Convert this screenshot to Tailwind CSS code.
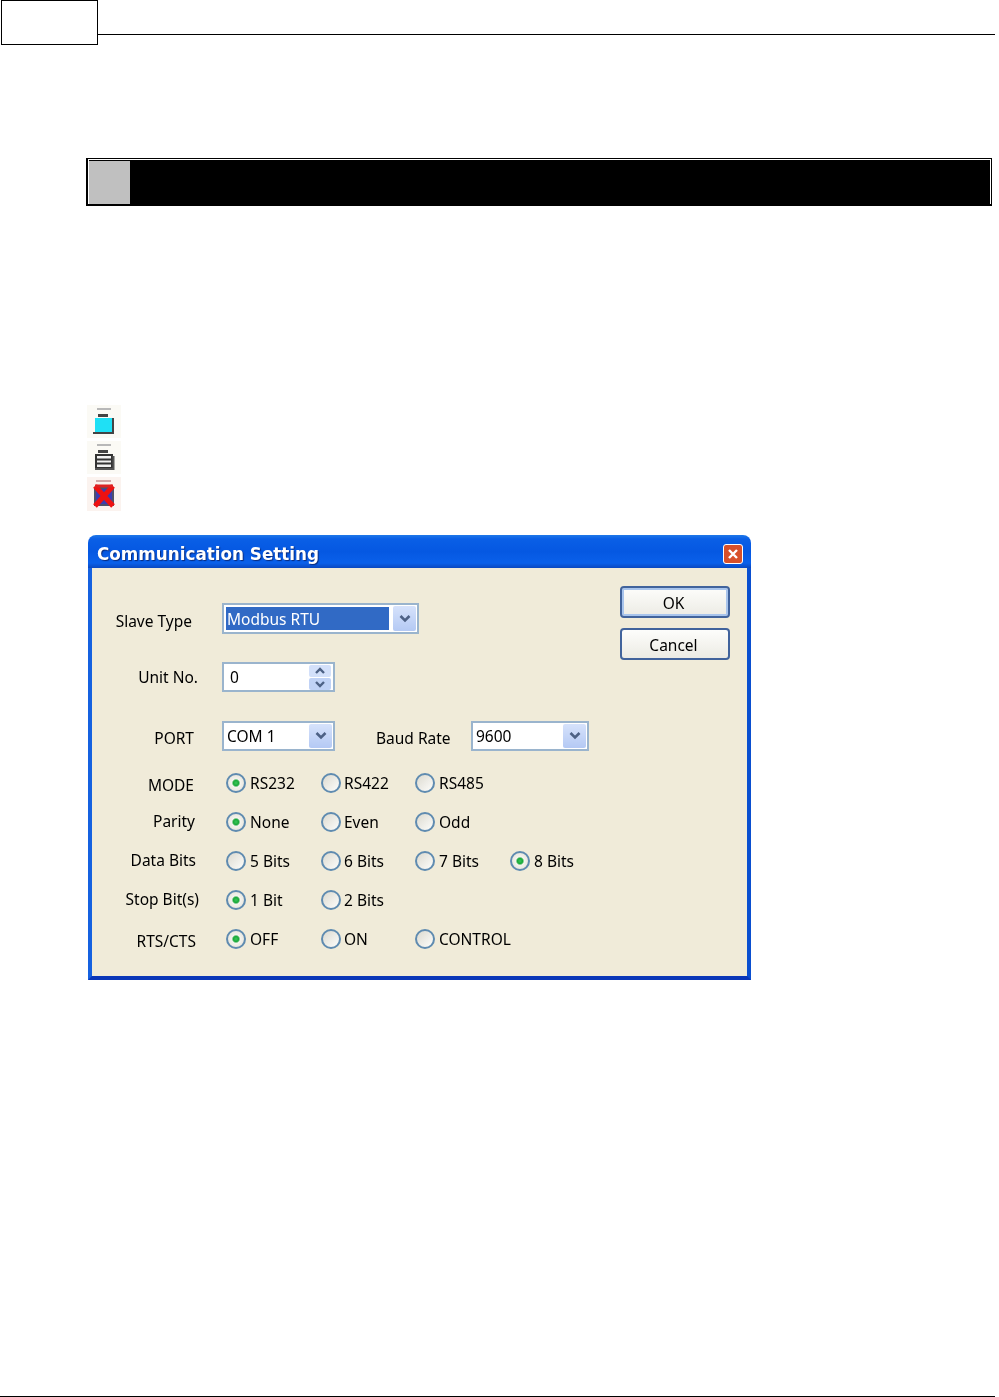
<!doctype html>
<html>
<head>
<meta charset="utf-8">
<script src="https://cdn.jsdelivr.net/npm/@tailwindcss/browser@4"></script>
</head>
<body class="bg-white">
<div class="relative w-[999px] h-[1397px] overflow-hidden bg-white font-['Noto_Sans',sans-serif] text-[15.5px] leading-[18px] text-black">

  <!-- header -->
  <header class="flex items-start pl-[1px] pr-[4px]">
    <div class="w-[97px] h-[45px] border border-black shrink-0"></div>
    <div class="flex-1 h-[1px] mt-[34px] bg-black"></div>
  </header>

  <!-- black section bar -->
  <div class="ml-[86px] mt-[113px] w-[906px] h-[48px] border-t border-l-2 border-b-2 border-r border-black bg-black">
    <div class="flex h-full border-l border-t border-r border-white">
      <div class="w-[41px] mt-[1px] bg-[#c0c0c0]"></div>
    </div>
  </div>

  <!-- toolbar icons -->
  <div class="ml-[87px] mt-[199px] flex flex-col gap-[3px] w-[34px] blur-[0.6px]">
    <svg width="34" height="33" viewBox="0 0 34 33" class="block bg-[#fbfaf5]">
      <rect x="10" y="3" width="14" height="2" fill="#b8b8b8"/>
      <rect x="11" y="9" width="10" height="3" fill="#444"/>
      <rect x="8" y="13" width="17" height="14" fill="#1fe0f5"/>
      <path d="M26 13v15H6" fill="none" stroke="#444" stroke-width="2"/>
    </svg>
    <svg width="34" height="33" viewBox="0 0 34 33" class="block bg-[#fbfaf5]">
      <rect x="10" y="3" width="14" height="2" fill="#b8b8b8"/>
      <rect x="11" y="9" width="10" height="3" fill="#444"/>
      <rect x="9" y="14" width="16" height="13" fill="#f2f2f2" stroke="#333" stroke-width="2"/>
      <path d="M9 18.500h16M9 22.500h16" stroke="#333" stroke-width="1.800"/>
      <path d="M26.500 15v13H8" fill="none" stroke="#555" stroke-width="2"/>
    </svg>
    <svg width="34" height="34" viewBox="0 0 34 34" class="block bg-[#fbf3ef]">
      <rect x="9" y="3" width="15" height="2" fill="#d0a8a8"/>
      <rect x="8" y="11" width="18" height="17" fill="#3c3cb0" stroke="#50506a" stroke-width="2"/>
      <path d="M8 9l18 20M26 9L8 29" stroke="#ee1111" stroke-width="5"/>
      <path d="M8 9h18" stroke="#dd2222" stroke-width="3"/>
    </svg>
  </div>

  <!-- dialog -->
  <section class="ml-[88px] mt-[24px] w-[663px] h-[445px] flex flex-col blur-[0.5px]">
    <div class="h-[33px] shrink-0 rounded-t-[8px] bg-[linear-gradient(180deg,#1f78e8_0%,#0a5fe6_12%,#0558e2_50%,#0a60ea_85%,#0a48c0_100%)] flex items-start pl-[9px] pr-[8px] justify-between">
      <span class="font-['DejaVu_Sans',sans-serif] font-bold text-white text-[16.8px] leading-none mt-[11px] [text-shadow:1px_1px_1px_#0a2a7a]">Communication Setting</span>
      <span class="w-[20px] h-[20px] mt-[9px] rounded-[3px] border border-white bg-[#d8502a] flex items-center justify-center">
        <svg width="12" height="12" viewBox="0 0 12 12"><path d="M2 2l8 8M10 2l-8 8" stroke="#fff" stroke-width="2.4"/></svg>
      </span>
    </div>
    <div class="flex-1 flex border-l-[4px] border-l-[#1561e0] border-r-[4px] border-r-[#0a4fd0] border-b-[4px] border-b-[#0a36b8] bg-[#f0ebd9]">
      <div class="flex-1 pt-[35px]">
        <div class="flex h-[31px]">
          <div class="w-[130px] text-right pr-[30px] pt-[9px]">Slave Type</div>
          <div class="w-[197px] h-[31px] border-2 border-[#9ab4cd] bg-white flex items-center pl-[2px] pr-[1px]">
            <span class="w-[163px] h-[23px] bg-[#316ac5] text-white flex items-center pl-[1px] pt-[1px]">Modbus RTU</span>
            <span class="ml-auto w-[23px] h-[25px] rounded-[2px] bg-[linear-gradient(180deg,#d6e2fb,#b4c9f4)] flex items-center justify-center">
              <svg width="14" height="10" viewBox="0 0 14 10"><path d="M2.500 2l4.500 4.500L11.500 2" fill="none" stroke="#4d6185" stroke-width="2.600"/></svg>
            </span>
          </div>
        </div>
        <div class="flex h-[30px] mt-[28px]">
          <div class="w-[130px] text-right pr-[24px] pt-[6px]">Unit No.</div>
          <div class="w-[113px] h-[30px] border-2 border-[#9ab4cd] bg-white flex items-center pl-[6px] pr-[2px]">
            <span>0</span>
            <span class="ml-auto w-[22px] h-[25px] flex flex-col gap-[1px]">
              <span class="h-[12px] rounded-[2px] bg-[#d3e0fa] flex items-center justify-center"><svg width="12" height="8" viewBox="0 0 12 8"><path d="M2 6l4-4 4 4" fill="none" stroke="#4d6185" stroke-width="2.400"/></svg></span>
              <span class="h-[12px] rounded-[2px] bg-[#c0d2f6] flex items-center justify-center"><svg width="12" height="8" viewBox="0 0 12 8"><path d="M2 2l4 4 4-4" fill="none" stroke="#4d6185" stroke-width="2.400"/></svg></span>
            </span>
          </div>
        </div>
        <div class="flex h-[30px] mt-[29px]">
          <div class="w-[130px] text-right pr-[28px] pt-[8px]">PORT</div>
          <div class="w-[113px] h-[30px] border-2 border-[#9ab4cd] bg-white flex items-center pl-[3px] pr-[1px]">
            <span>COM 1</span>
            <span class="ml-auto w-[23px] h-[24px] rounded-[2px] bg-[linear-gradient(180deg,#d6e2fb,#b4c9f4)] flex items-center justify-center">
              <svg width="14" height="10" viewBox="0 0 14 10"><path d="M2.500 2l4.500 4.500L11.500 2" fill="none" stroke="#4d6185" stroke-width="2.600"/></svg>
            </span>
          </div>
          <div class="ml-[41px] pt-[8px] w-[95px]">Baud Rate</div>
          <div class="w-[118px] h-[30px] border-2 border-[#9ab4cd] bg-white flex items-center pl-[3px] pr-[1px]">
            <span>9600</span>
            <span class="ml-auto w-[23px] h-[24px] rounded-[2px] bg-[linear-gradient(180deg,#d6e2fb,#b4c9f4)] flex items-center justify-center">
              <svg width="14" height="10" viewBox="0 0 14 10"><path d="M2.500 2l4.500 4.500L11.500 2" fill="none" stroke="#4d6185" stroke-width="2.600"/></svg>
            </span>
          </div>
        </div>

        <div class="flex h-[20px] mt-[22px] items-center">
          <div class="w-[130px] text-right pr-[28px] pt-[3px]">MODE</div>
          <div class="w-[99px] pl-[4px] flex items-center"><span class="w-[20px] h-[20px] rounded-full border-[2.5px] border-[#5f8bb0] bg-[radial-gradient(circle,#3ac858_0%,#1aa83a_24%,#f4f3ee_38%,#e0ded2_100%)]"></span><span class="ml-[4px]">RS232</span></div>
          <div class="w-[94px] flex items-center"><span class="w-[20px] h-[20px] rounded-full border-[2.5px] border-[#5f8bb0] bg-[linear-gradient(135deg,#dcdad0,#fdfdfb)]"></span><span class="ml-[3px]">RS422</span></div>
          <div class="flex items-center"><span class="w-[20px] h-[20px] rounded-full border-[2.5px] border-[#5f8bb0] bg-[linear-gradient(135deg,#dcdad0,#fdfdfb)]"></span><span class="ml-[4px]">RS485</span></div>
        </div>
        <div class="flex h-[20px] mt-[19px] items-center">
          <div class="w-[130px] text-right pr-[27px] pb-[2px]">Parity</div>
          <div class="w-[99px] pl-[4px] flex items-center"><span class="w-[20px] h-[20px] rounded-full border-[2.5px] border-[#5f8bb0] bg-[radial-gradient(circle,#3ac858_0%,#1aa83a_24%,#f4f3ee_38%,#e0ded2_100%)]"></span><span class="ml-[4px]">None</span></div>
          <div class="w-[94px] flex items-center"><span class="w-[20px] h-[20px] rounded-full border-[2.5px] border-[#5f8bb0] bg-[linear-gradient(135deg,#dcdad0,#fdfdfb)]"></span><span class="ml-[3px]">Even</span></div>
          <div class="flex items-center"><span class="w-[20px] h-[20px] rounded-full border-[2.5px] border-[#5f8bb0] bg-[linear-gradient(135deg,#dcdad0,#fdfdfb)]"></span><span class="ml-[4px]">Odd</span></div>
        </div>
        <div class="flex h-[20px] mt-[19px] items-center">
          <div class="w-[130px] text-right pr-[26px] pb-[2px]">Data Bits</div>
          <div class="w-[99px] pl-[4px] flex items-center"><span class="w-[20px] h-[20px] rounded-full border-[2.5px] border-[#5f8bb0] bg-[linear-gradient(135deg,#dcdad0,#fdfdfb)]"></span><span class="ml-[4px]">5 Bits</span></div>
          <div class="w-[94px] flex items-center"><span class="w-[20px] h-[20px] rounded-full border-[2.5px] border-[#5f8bb0] bg-[linear-gradient(135deg,#dcdad0,#fdfdfb)]"></span><span class="ml-[3px]">6 Bits</span></div>
          <div class="w-[95px] flex items-center"><span class="w-[20px] h-[20px] rounded-full border-[2.5px] border-[#5f8bb0] bg-[linear-gradient(135deg,#dcdad0,#fdfdfb)]"></span><span class="ml-[4px]">7 Bits</span></div>
          <div class="flex items-center"><span class="w-[20px] h-[20px] rounded-full border-[2.5px] border-[#5f8bb0] bg-[radial-gradient(circle,#3ac858_0%,#1aa83a_24%,#f4f3ee_38%,#e0ded2_100%)]"></span><span class="ml-[4px]">8 Bits</span></div>
        </div>
        <div class="flex h-[20px] mt-[19px] items-center">
          <div class="w-[130px] text-right pr-[23px] pb-[2px]">Stop Bit(s)</div>
          <div class="w-[99px] pl-[4px] flex items-center"><span class="w-[20px] h-[20px] rounded-full border-[2.5px] border-[#5f8bb0] bg-[radial-gradient(circle,#3ac858_0%,#1aa83a_24%,#f4f3ee_38%,#e0ded2_100%)]"></span><span class="ml-[4px]">1 Bit</span></div>
          <div class="w-[94px] flex items-center"><span class="w-[20px] h-[20px] rounded-full border-[2.5px] border-[#5f8bb0] bg-[linear-gradient(135deg,#dcdad0,#fdfdfb)]"></span><span class="ml-[3px]">2 Bits</span></div>
        </div>
        <div class="flex h-[20px] mt-[19px] items-center">
          <div class="w-[130px] text-right pr-[26px] pt-[3px]">RTS/CTS</div>
          <div class="w-[99px] pl-[4px] flex items-center"><span class="w-[20px] h-[20px] rounded-full border-[2.5px] border-[#5f8bb0] bg-[radial-gradient(circle,#3ac858_0%,#1aa83a_24%,#f4f3ee_38%,#e0ded2_100%)]"></span><span class="ml-[4px]">OFF</span></div>
          <div class="w-[94px] flex items-center"><span class="w-[20px] h-[20px] rounded-full border-[2.5px] border-[#5f8bb0] bg-[linear-gradient(135deg,#dcdad0,#fdfdfb)]"></span><span class="ml-[3px]">ON</span></div>
          <div class="flex items-center"><span class="w-[20px] h-[20px] rounded-full border-[2.5px] border-[#5f8bb0] bg-[linear-gradient(135deg,#dcdad0,#fdfdfb)]"></span><span class="ml-[4px]">CONTROL</span></div>
        </div>
      </div>
      <div class="w-[127px] pt-[18px] flex flex-col gap-[10px] shrink-0">
        <button class="w-[110px] h-[32px] pr-[3px] pt-[1px] rounded-[4px] border-2 border-[#41639c] bg-[linear-gradient(180deg,#fdfdfb,#ecebe4)] shadow-[inset_0_0_0_2px_#a8c4ec] text-black">OK</button>
        <button class="w-[110px] h-[32px] pr-[3px] pt-[1px] rounded-[4px] border-2 border-[#41639c] bg-[linear-gradient(180deg,#fdfdfb,#ecebe4)] text-black">Cancel</button>
      </div>
    </div>
  </section>

  <!-- footer rule -->
  <div class="absolute left-0 right-[4px] bottom-0 h-[1px] bg-black"></div>
</div>
</body>
</html>
